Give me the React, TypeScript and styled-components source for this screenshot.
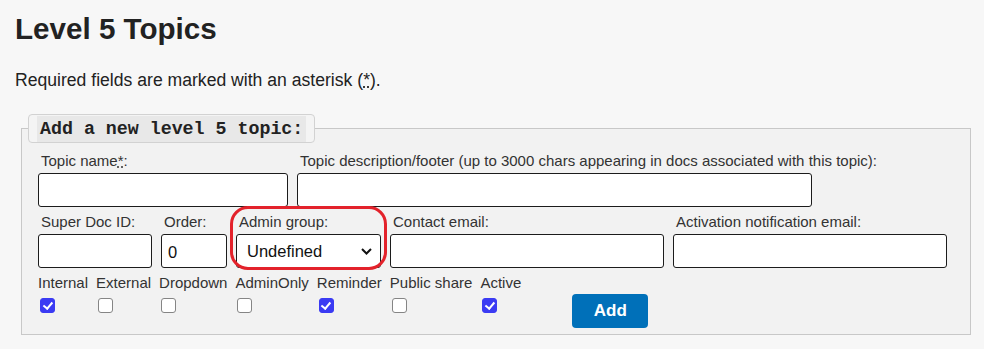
import styled, { createGlobalStyle } from "styled-components";

const GlobalStyle = createGlobalStyle`
  body {
    margin: 0;
    background: #f7f7f7;
    font-family: "Liberation Sans", Arial, sans-serif;
    color: #333;
  }
`;

const Page = styled.div`
  padding: 12px 15px 0;
`;

const Title = styled.h1`
  margin: 0;
  font-size: 29.6px;
  line-height: 33px;
  font-weight: 700;
  color: #222;
`;

const Intro = styled.p`
  margin: 25px 0 0;
  font-size: 17.6px;
  line-height: 20px;
  color: #222;
`;

const FormBox = styled.fieldset`
  margin: 24px 0 0 6px;
  width: 950px;
  min-width: 0;
  box-sizing: border-box;
  border: 1px solid #c8c8c8;
  background: #f2f2f2;
  padding: 9px 6px 6px;
`;

const Legend = styled.legend`
  padding: 1px 8px 0;
  border: 1px solid #d2d2d2;
  border-radius: 4px;
  background: #f4f4f4;
`;

const LegendCode = styled.code`
  display: block;
  padding: 2px 3px;
  background: #e8e8e8;
  font-family: "Liberation Mono", "DejaVu Sans Mono", monospace;
  font-size: 18.3px;
  line-height: 22px;
  font-weight: 700;
  color: #222;
`;

const Content = styled.div`
  padding-left: 10px;
`;

const Row = styled.div`
  display: flex;
  align-items: flex-start;
  gap: 9px;
  margin-bottom: 6px;
`;

const Field = styled.div`
  position: relative;
  display: flex;
  flex-direction: column;
  gap: 4px;
`;

const Label = styled.label`
  padding-left: 3px;
  font-size: 15px;
  line-height: 17px;
  color: #333;
`;

const Req = styled.abbr`
  text-decoration: underline dotted;
  cursor: help;
`;

const TextInput = styled.input<{ $w: number }>`
  width: ${(p) => p.$w}px;
  height: 34px;
  box-sizing: border-box;
  border: 1px solid #1c1c1c;
  border-radius: 3px;
  background: #fff;
  padding: 3px 6px 0;
  font: 16.5px "Liberation Sans", Arial, sans-serif;
  color: #111;
  outline: none;
`;

const SelectWrap = styled.div`
  position: relative;
  width: 145px;
`;

const Select = styled.select`
  appearance: none;
  width: 100%;
  height: 34px;
  box-sizing: border-box;
  border: 1px solid #1c1c1c;
  border-radius: 3px;
  background: #fff;
  padding: 0 28px 0 10px;
  font: 16.5px "Liberation Sans", Arial, sans-serif;
  color: #111;
  outline: none;
`;

const Chevron = styled.svg`
  position: absolute;
  right: 9px;
  top: 14px;
  pointer-events: none;
`;

const Highlight = styled.span`
  position: absolute;
  top: -7px;
  left: -6px;
  right: -6px;
  bottom: -2px;
  border: 3.5px solid #e3222b;
  border-radius: 18px;
  pointer-events: none;
`;

const CheckRow = styled.div`
  display: flex;
  align-items: flex-start;
  gap: 8px;
`;

const CheckCol = styled.label`
  display: flex;
  flex-direction: column;
  align-items: flex-start;
  gap: 7px;
  font-size: 15px;
  line-height: 17px;
  color: #333;
`;

const Check = styled.input.attrs({ type: "checkbox" })`
  appearance: none;
  position: relative;
  margin: 0 0 0 2px;
  width: 15px;
  height: 15px;
  box-sizing: border-box;
  border: 1.5px solid #858585;
  border-radius: 3px;
  background: #fff;

  &:checked {
    border-color: #3b3bf3;
    background: #3b3bf3;
  }

  &:checked::after {
    content: "";
    position: absolute;
    left: 3.5px;
    top: 0.5px;
    width: 3.5px;
    height: 7px;
    border: solid #fff;
    border-width: 0 2px 2px 0;
    transform: rotate(40deg);
  }
`;

const AddButton = styled.button`
  margin: 20px 0 0 43px;
  width: 76px;
  height: 34px;
  border: none;
  border-radius: 4px;
  background: #0070b9;
  color: #fff;
  font: 700 17px "Liberation Sans", Arial, sans-serif;
  cursor: pointer;
`;

const flags: [string, boolean][] = [
  ["Internal", true],
  ["External", false],
  ["Dropdown", false],
  ["AdminOnly", false],
  ["Reminder", true],
  ["Public share", false],
  ["Active", true],
];

export default function App() {
  return (
    <>
      <GlobalStyle />
      <Page>
        <Title>Level 5 Topics</Title>
        <Intro>
          Required fields are marked with an asterisk (<Req title="required">*</Req>).
        </Intro>
        <FormBox>
          <Legend>
            <LegendCode>Add a new level 5 topic:</LegendCode>
          </Legend>
          <Content>
            <Row>
              <Field>
                <Label>
                  Topic name<Req title="required">*</Req>:
                </Label>
                <TextInput $w={250} />
              </Field>
              <Field>
                <Label>
                  Topic description/footer (up to 3000 chars appearing in docs associated with this topic):
                </Label>
                <TextInput $w={515} />
              </Field>
            </Row>
            <Row>
              <Field>
                <Label>Super Doc ID:</Label>
                <TextInput $w={114} />
              </Field>
              <Field>
                <Label>Order:</Label>
                <TextInput $w={66} defaultValue="0" />
              </Field>
              <Field>
                <Label>Admin group:</Label>
                <SelectWrap>
                  <Select defaultValue="undefined">
                    <option value="undefined">Undefined</option>
                  </Select>
                  <Chevron width="11" height="7" viewBox="0 0 11 7">
                    <path d="M1 1 L5.5 5.5 L10 1" fill="none" stroke="#111" strokeWidth="2" />
                  </Chevron>
                </SelectWrap>
                <Highlight />
              </Field>
              <Field>
                <Label>Contact email:</Label>
                <TextInput $w={274} />
              </Field>
              <Field>
                <Label>Activation notification email:</Label>
                <TextInput $w={274} />
              </Field>
            </Row>
            <CheckRow>
              {flags.map(([name, on]) => (
                <CheckCol key={name}>
                  <span>{name}</span>
                  <Check defaultChecked={on} />
                </CheckCol>
              ))}
              <AddButton type="button">Add</AddButton>
            </CheckRow>
          </Content>
        </FormBox>
      </Page>
    </>
  );
}
